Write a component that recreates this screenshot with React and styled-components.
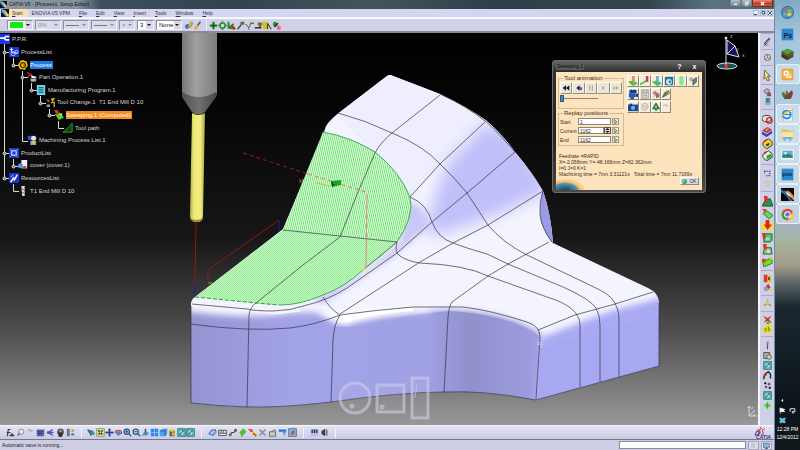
import React from "react";
import styled, { createGlobalStyle } from "styled-components";

const GlobalStyle = createGlobalStyle`
    html, body, #root {
        height: 100%;
        margin: 0;
    }
    body {
        overflow: hidden;
        background: #000;
        font-family: "Liberation Sans", Arial, sans-serif;
        font-size: 6px;
        color: #1c1c30;
    }
    * {
        box-sizing: border-box;
    }
    button, input, select {
        font: inherit;
        color: inherit;
        margin: 0;
        padding: 0;
        border: 0;
        background: none;
        border-radius: 0;
        outline: none;
    }
`;

const Desktop = styled.div`
    display: grid;
    grid-template-columns: minmax(0, 1fr) 26px;
    height: 100vh;
`;

const AppWindow = styled.div`
    display: flex;
    flex-direction: column;
    min-width: 0;
    background: #cfcfe6;
`;

const TitleBar = styled.header`
    display: flex;
    align-items: center;
    gap: 2px;
    height: 9px;
    font-size: 5px;
    line-height: 9px;
    color: #0c1218;
    background: linear-gradient(90deg, #8b98a4 0, #84919c 10%, #3d4f5d 13%, #33434f 30%, #43545f 48%, #2f3f4b 64%, #33454f 84%, #5a7482 92%, #4b616d 100%);
`;

const TitleText = styled.h1`
    flex: 1;
    margin: 0;
    font-size: 5px;
    font-weight: 400;
    white-space: nowrap;
`;

const CaptionButtons = styled.div`
    display: flex;
    align-self: flex-start;
    margin-right: 1px;
`;

const CaptionButton = styled.button`
    display: flex;
    justify-content: center;
    align-items: center;
    width: ${(props) => (props.$close ? "21px" : "11px")};
    height: 7px;
    border-radius: 0 0 2px 2px;
    border: 1px solid ${(props) => (props.$close ? "#7a2a1c" : "#6d7f8b")};
    border-top: 0;
    background: ${(props) => (props.$close ? "linear-gradient(#e08a78, #c23a22 60%, #d8573c)" : "linear-gradient(#b4c0c8, #6f808c)")};
`;

const MenuBar = styled.nav`
    display: flex;
    align-items: center;
    height: 9px;
    padding: 0 1px;
    font-size: 5px;
    background: #d5d5ee;
    border-bottom: 1px solid #f2f2fb;
`;

const MenuList = styled.div`
    display: flex;
    flex: 1;
    align-items: center;
    gap: 9px;
    margin-left: 3px;
`;

const MenuItem = styled.button`
    height: 8px;
    line-height: 8px;
    white-space: nowrap;
    color: #303048;
    background: ${(props) => (props.$active ? "#fbe0b4" : "none")};
    box-shadow: ${(props) => (props.$active ? "-3px 0 #fbe0b4, 5px 0 #fbe0b4" : "none")};
`;

const MdiButton = styled.button`
    display: flex;
    align-items: center;
    justify-content: center;
    width: 6px;
    height: 6px;
    margin-left: 1px;
    background: #e6f0f8;
    border: 1px solid #a7c2d6;
`;

const TopToolbar = styled.div`
    display: flex;
    align-items: center;
    gap: 2px;
    height: 15px;
    padding-left: 7px;
    background: #d0d0e8;
    border-top: 1px solid #fafaff;
    border-bottom: 2px solid #8a8a9c;
`;

const ComboBox = styled.div`
    position: relative;
    width: ${(props) => props.$width}px;
    height: 10px;
    background: ${(props) => (props.$off ? "#dcdce8" : "#ffffff")};
    border: 1px solid #8d8da4;
    border-right-color: #f2f2fa;
    border-bottom-color: #f2f2fa;
    &::before {
        content: "";
        position: absolute;
        left: 2px;
        right: 9px;
        top: ${(props) => (props.$fill ? "1px" : "4px")};
        height: ${(props) => (props.$fill ? "6px" : "1px")};
        background: ${(props) => props.$fill || props.$rule || "none"};
    }
    &::after {
        content: "";
        position: absolute;
        right: 2px;
        top: 3px;
        border: 2px solid transparent;
        border-top-color: ${(props) => (props.$off ? "#8a8a9c" : "#111")};
    }
`;

const ComboSelect = styled.select`
    appearance: none;
    display: block;
    width: 100%;
    height: 8px;
    padding-left: 2px;
    font-size: 6px;
    line-height: 8px;
    color: ${(props) => (props.$off ? "#8c8c9e" : "#141428")};
    background: linear-gradient(#d6d6e8, #d6d6e8) right / 7px 8px no-repeat;
`;

const ToolButton = styled.button`
    display: flex;
    align-items: center;
    justify-content: center;
    flex: none;
    width: ${(props) => props.$width || 9}px;
    height: ${(props) => props.$height || 10}px;
    svg {
        display: block;
        flex: none;
        width: ${(props) => props.$icon || 9}px;
        height: ${(props) => props.$icon || 9}px;
    }
`;

const TopTools = styled.div`
    display: flex;
    margin-left: ${(props) => (props.$divided ? "2px" : 0)};
    padding-left: ${(props) => (props.$divided ? "2px" : 0)};
    border-left: ${(props) => (props.$divided ? "1px solid #efeffa" : 0)};
`;

const Workspace = styled.div`
    display: flex;
    flex: 1;
    min-height: 0;
`;

const Viewport = styled.main`
    position: relative;
    flex: 1;
    min-width: 0;
    overflow: hidden;
    background: linear-gradient(#000 0, #060606 20%, #161616 52%, #4c4c4c 75%, #989898 100%);
`;

const Scene = styled.svg`
    display: block;
    width: 100%;
    height: 100%;
`;

const TreePanel = styled.section`
    position: absolute;
    left: 0;
    top: 0;
    height: 164px;
`;

const TreeLines = styled.svg`
    position: absolute;
    left: 0;
    top: 0;
`;

const TreeList = styled.ul`
    position: relative;
    display: grid;
    grid-template-rows: repeat(13, 1fr);
    height: 100%;
    margin: 0;
    padding: 0;
    list-style: none;
`;

const TreeRow = styled.li`
    display: flex;
    align-items: center;
    gap: 2px;
    padding-left: ${(props) => props.$depth * 9}px;
    color: #d4d4d4;
    white-space: pre;
    svg {
        width: 10px;
        height: 10px;
    }
`;

const TreeLabel = styled.span`
    line-height: 8px;
    padding: 0 1px 0 0;
    color: ${(props) => (props.$mark ? "#fff" : "inherit")};
    background: ${(props) => props.$mark || "none"};
`;

const SideDock = styled.aside`
    display: flex;
    flex-direction: column;
    align-items: center;
    width: 16px;
    background: #cfcfe8;
    border-left: 2px solid #f4f4fc;
`;

const SideGroup = styled.div`
    width: 12px;
    padding: 3px 0;
    border-top: 1px solid #a9a9c4;
`;

const BottomToolbar = styled.div`
    display: flex;
    align-items: center;
    height: 15px;
    padding-left: 5px;
    background: linear-gradient(#e4e4f4, #cbcbe4);
    border-top: 1px solid #f6f6fc;
    border-bottom: 1px solid #77778c;
`;

const BottomGroup = styled.div`
    display: flex;
    padding-right: 6px;
    margin-right: 5px;
    border-right: 1px solid #f2f2fb;
`;

const Brand = styled.div`
    margin-left: auto;
    width: 20px;
    height: 14px;
`;

const StatusBar = styled.footer`
    display: flex;
    align-items: center;
    gap: 2px;
    height: 10px;
    padding: 0 2px;
    font-size: 5px;
    background: #cdcde4;
`;

const StatusText = styled.span`
    flex: 1;
`;

const CommandInput = styled.input`
    width: 127px;
    height: 8px;
    background: #fff;
    border: 1px solid #8c8ca2;
`;

const StatusButton = styled.button`
    display: flex;
    justify-content: center;
    width: 11px;
    height: 9px;
    background: #dedeee;
    border: 1px solid #a4a4bc;
    svg {
        width: 7px;
        height: 7px;
    }
`;

const Dialog = styled.section`
    position: absolute;
    right: 52px;
    top: 27px;
    width: 154px;
    padding: 0 3px 2px;
    border: 1px solid #6c6c6c;
    border-radius: 3px;
    background: linear-gradient(#666 0, #2f2f2f 8%, #262626 60%, #4a4a4a 100%);
    font-size: 5px;
    color: #3a2c20;
`;

const DialogTitle = styled.div`
    display: flex;
    align-items: center;
    height: 11px;
    color: #0a0a0a;
    h2 {
        margin: 0 auto 0 0;
        padding: 0 1px;
        font-size: 5px;
        font-weight: 400;
        line-height: 7px;
        background: #5c5c5c;
        border-radius: 2px;
    }
`;

const DialogCaption = styled.button`
    width: 15px;
    height: 8px;
    font-size: 7px;
    font-weight: 700;
    line-height: 8px;
    color: #fff;
`;

const DialogBody = styled.div`
    height: 118px;
    padding: 3px 2px;
    background: radial-gradient(ellipse 20px 12px at 9px 119px, #1a3040 0, #4b94bf 62%, #f7c065 76%, #fbd99c 100%, transparent 101%), #fde4bd;
`;

const DialogTop = styled.div`
    display: flex;
    gap: 3px;
`;

const DialogLeft = styled.div`
    width: 66px;
`;

const Panel = styled.fieldset`
    min-width: 0;
    height: ${(props) => props.$height}px;
    margin: 0 0 1px;
    padding: 0 1px;
    border: 1px solid #cdbd9f;
    legend {
        margin-left: 3px;
        padding: 0 1px;
        font-size: 6px;
        line-height: 7px;
    }
`;

const PlayRow = styled.div`
    display: grid;
    grid-template-columns: repeat(5, 1fr);
    margin-bottom: 1px;
`;

const PlayButton = styled.button`
    display: flex;
    align-items: center;
    justify-content: center;
    height: 12px;
    background: #ece6d8;
    border: 1px solid #fff;
    border-right-color: #99917f;
    border-bottom-color: #99917f;
    svg {
        width: 8px;
        height: 8px;
    }
`;

const ProgressSlider = styled.input`
    appearance: none;
    display: block;
    width: 38px;
    height: 7px;
    background: linear-gradient(#8a8272, #8a8272) center / 100% 1px no-repeat;
    &::-webkit-slider-thumb {
        appearance: none;
        width: 4px;
        height: 7px;
        background: #3e8fc4;
        border: 1px solid #2a5d80;
    }
`;

const FieldRow = styled.div`
    display: flex;
    align-items: center;
    height: 9px;
    label {
        width: 18px;
    }
`;

const FieldInput = styled.input`
    width: ${(props) => (props.$spin ? "26px" : "33px")};
    height: 7px;
    padding-left: 1px;
    background: #fff;
    border: 1px solid #8c8474;
`;

const Spinner = styled.button`
    width: 7px;
    height: 7px;
    background: #ddd8cc;
    border: 1px solid #555;
    svg {
        display: block;
        width: 5px;
        height: 5px;
    }
`;

const PickButton = styled.button`
    width: 7px;
    height: 7px;
    margin-left: 1px;
    background: #efe8d8;
    border: 1px solid #a49c8a;
    svg {
        display: block;
        width: 5px;
        height: 5px;
    }
`;

const OptionRow = styled.div`
    display: flex;
    margin-bottom: 1px;
`;

const OptionButton = styled.button`
    display: flex;
    align-items: center;
    justify-content: center;
    width: ${(props) => (props.$small ? "10px" : "12px")};
    height: 12px;
    background: #f3ecdc;
    border: 1px solid #fff;
    border-right-color: #8f8776;
    border-bottom-color: #8f8776;
    svg {
        flex: none;
        width: ${(props) => (props.$small ? "8px" : "10px")};
        height: ${(props) => (props.$small ? "8px" : "10px")};
    }
`;

const Readout = styled.p`
    margin: 6px 0 0 1px;
    line-height: 6px;
    white-space: pre;
`;

const OkButton = styled.button`
    display: flex;
    align-items: center;
    justify-content: center;
    gap: 2px;
    width: 19px;
    height: 8px;
    margin: 0 1px 0 auto;
    background: #d9d9ea;
    border: 1px solid #fff;
    border-right-color: #88889a;
    border-bottom-color: #88889a;
    &::before {
        content: "";
        width: 5px;
        height: 5px;
        border-radius: 50%;
        background: radial-gradient(circle at 35% 35%, #7fe07f, #0c7a14);
    }
`;

const Taskbar = styled.aside`
    display: flex;
    flex-direction: column;
    align-items: center;
    background: linear-gradient(#7fa9c4 0, #a5c6de 8%, #b3cde2 30%, #a3b4c0 50%, #a6b39a 54%, #a39c8a 59%, #5b6468 63%, #1c2830 68%, #0c141b 90%, #11181d 100%);
    border-left: 1px solid #6b8ca2;
`;

const TaskButton = styled.button`
    display: flex;
    align-items: center;
    justify-content: center;
    width: 24px;
    height: ${(props) => props.$height || 20}px;
    border: 1px solid ${(props) => (props.$open ? "#e9f1f7" : "transparent")};
    border-radius: 2px;
    background: ${(props) => (props.$open ? "rgba(235, 243, 250, 0.45)" : "none")};
    svg {
        width: 13px;
        height: 13px;
    }
`;

const Tray = styled.div`
    display: grid;
    grid-template-columns: 10px 10px;
    grid-auto-rows: 10px;
    justify-items: center;
    align-items: center;
    margin-top: auto;
    svg {
        width: 7px;
        height: 7px;
    }
`;

const Clock = styled.time`
    margin-bottom: 9px;
    font-size: 5px;
    line-height: 8px;
    text-align: center;
    color: #fff;
`;

// every glyph is drawn on a 12 x 12 grid
const glyphs = {
    app: <><rect width="12" height="12" fill="#0b1020" /><path d="M0 0L7 2L12 10L8 12L1 5Z" fill="#3f8fd6" /><path d="M4 3L12 8V12L7 10Z" fill="#f0a030" /><path d="M1 1L8 5L10 11" stroke="#fff" fill="none" /></>,
    minimize: <path d="M2 8H10" stroke="#fff" strokeWidth="3" />,
    restore: <path d="M3 5H8V10H3ZM5 4V2H10V8" fill="none" stroke="#fff" strokeWidth="2" />,
    close: <path d="M2 2L10 10M10 2L2 10" stroke="#fff" strokeWidth="3" />,
    paint: <><path d="M1 7Q3 2 7 5L6 10Q2 12 1 7Z" fill="#3d78cc" /><path d="M5 7L10 1L12 3L8 9Z" fill="#efc020" stroke="#4a4a20" strokeWidth=".7" /></>,
    wand: <><path d="M1 10L4 5L8 8L4 12Z" fill="#f3b21c" /><path d="M6 6L10 1" stroke="#3855a6" strokeWidth="2" /></>,
    plus: <><path d="M6 1V11M1 6H11" stroke="#208828" strokeWidth="3" /><path d="M6 3V9M3 6H9" stroke="#103c16" /></>,
    ring: <><circle cx="6" cy="6" r="3.5" fill="none" stroke="#228c2a" strokeWidth="2" /><path d="M6 0V4M6 8V12M0 6H4M8 6H12" stroke="#35a03c" strokeWidth="2" /></>,
    branch: <><path d="M2 1V9L10 10M2 9L9 4" stroke="#27852c" strokeWidth="2.5" fill="none" /><path d="M6 6L11 11" stroke="#cc2622" strokeWidth="2.5" /></>,
    drill: <><path d="M2 11L7 5" stroke="#54543e" strokeWidth="2" /><rect x="6" y="1" width="5" height="4" fill="#5c6c38" /></>,
    probe: <><path d="M1 4L5 9L8 3" stroke="#333" fill="none" /><rect x="7" y="2" width="5" height="2" fill="#61762a" /><path d="M5 8V12" stroke="#555" /></>,
    step: <><rect x="5" y="2" width="6" height="4" fill="#65742e" /><path d="M1 9H10M8 6V9" stroke="#303030" strokeWidth="2" /></>,
    fold: <><path d="M0 1H6V11H0Z" fill="#d8c010" /><path d="M6 3L11 11M6 3V11" stroke="#454525" strokeWidth="1.5" /></>,
    stop: <><circle cx="4" cy="4" r="3" fill="#259a33" /><path d="M3 8L8 3" stroke="#222" strokeWidth="2" /><circle cx="9" cy="9" r="3" fill="#f06c78" /></>,
    ppr: <><rect width="12" height="12" fill="#1b38e0" /><path d="M0 5H5L7 3H11M5 5L7 7H11" stroke="#fff" strokeWidth="2" fill="none" /></>,
    process: <><rect width="12" height="12" fill="#1736cf" /><path d="M1 3H5M3 1V7H10" stroke="#fff" fill="none" /><circle cx="5" cy="8" r="2.5" fill="none" stroke="#c9d6ff" /><circle cx="9" cy="6" r="2" fill="none" stroke="#c9d6ff" /></>,
    gear: <><path d="M6 0L8 1L11 2L11 4L12 7L10 9L8 12L5 11L2 11L1 8L0 6L1 4L3 1Z" fill="#f2bd12" /><circle cx="6" cy="6" r="3" fill="none" stroke="#473400" strokeWidth="1.5" /><path d="M6 6H10" stroke="#473400" /></>,
    part: <><path d="M0 0L5 4M1 6L6 2" stroke="#d4252c" strokeWidth="1.5" /><path d="M5 4L12 6L9 8L5 7Z" fill="#e9e9ef" /><path d="M4 8L11 8V11L5 12Z" fill="#b6b6c6" stroke="#555" strokeWidth=".6" /></>,
    sheet: <><rect x="1" y="0" width="10" height="12" fill="#6fd5e4" /><path d="M3 3H9M3 5H9M3 7H9M3 9H9" stroke="#124e82" /></>,
    change: <><path d="M1 2L6 4L4 7Z" fill="#a3532c" /><path d="M7 2L12 1L9 6Z" fill="#f7c425" /><path d="M2 9H6V12H2Z" fill="#979797" /><path d="M7 7L11 6V12" stroke="#e1b13a" strokeWidth="1.5" fill="none" /></>,
    sweep: <><path d="M1 5L7 3L12 9L6 12Z" fill="#3ddc32" /><path d="M0 0L5 0L6 5L3 6Z" fill="#d93126" /><path d="M7 5L10 4L9 7Z" fill="#fff" /></>,
    tri: <><path d="M0 11L5 7L11 0V11Z" fill="#123f12" stroke="#21b429" /></>,
    list: <><path d="M1 1H6V6H1Z" fill="#3853c8" /><circle cx="8" cy="4" r="3" fill="#e2e2ec" /><path d="M4 7H11V12H4Z" fill="#98a3bc" /><circle cx="8" cy="9" r="1.5" fill="#f1df28" /></>,
    product: <><rect width="12" height="12" fill="#1b37c6" /><circle cx="6" cy="6" r="3" fill="none" stroke="#aab8f4" strokeWidth="2" /><path d="M1 1L4 4M11 1L8 4M1 11L4 8M11 11L8 8" stroke="#aab8f4" /></>,
    cover: <><rect x="4" y="0" width="7" height="10" fill="#f0f2fa" /><circle cx="3" cy="7" r="3" fill="#489be6" /><path d="M5 9Q9 4 11 11Z" fill="#df333c" /></>,
    resource: <><rect width="12" height="12" fill="#1934d2" /><path d="M2 11L6 5M6 9L10 2" stroke="#dfe6ff" strokeWidth="2" /><path d="M2 5L5 2" stroke="#dfe6ff" /></>,
    mill: <><path d="M4 0H8V12H5Z" fill="#ddd" /><path d="M4 3L8 5M4 7L8 9" stroke="#555" /></>,
    cube: <><path d="M1 4L4 1H11V8L8 11H1Z" fill="#4fa0f0" /><path d="M1 4H8L11 1M8 4V11" stroke="#174c91" fill="none" /></>,
    fly: <><path d="M1 2L6 10M4 3L9 9" stroke="#176f77" strokeWidth="2" /><path d="M7 2L11 8L7 8Z" fill="#4690ba" /></>,
    fit: <><rect x="1" y="1" width="10" height="10" fill="#e9e38a" stroke="#7c8b58" /><path d="M3 3L9 9M9 3L3 9" stroke="#264c2b" strokeWidth="2" strokeDasharray="3 2" /></>,
    pan: <path d="M6 0L8 3H7V5H9V4L12 6L9 8V7H7V9H8L6 12L4 9H5V7H3V8L0 6L3 4V5H5V3H4Z" fill="#20458d" />,
    rotate: <><path d="M2 7Q1 3 6 3Q11 3 10 8" fill="none" stroke="#c53d3a" strokeWidth="1.5" /><circle cx="6" cy="7" r="3" fill="#5b7ec4" /></>,
    zoomin: <><circle cx="5" cy="5" r="3.5" fill="#bfe4f2" stroke="#24507d" strokeWidth="1.5" /><path d="M8 8L11 11M3 5H7M5 3V7" stroke="#24507d" strokeWidth="1.5" /></>,
    zoomout: <><circle cx="5" cy="5" r="3.5" fill="#bfe4f2" stroke="#24507d" strokeWidth="1.5" /><path d="M8 8L11 11M3 5H7" stroke="#24507d" strokeWidth="1.5" /></>,
    normal: <><path d="M1 10L4 6H11L8 10Z" fill="#4897a0" /><path d="M6 1V7" stroke="#216070" strokeWidth="2" /></>,
    views: <><rect x="1" y="1" width="10" height="10" fill="#2e8af6" /><path d="M6 1V11M1 6H11" stroke="#9cc8fa" strokeWidth="1" /></>,
    barrel: <><path d="M2 3H9V11H2Z" fill="#6d5f35" /><ellipse cx="5.5" cy="3" rx="3.5" ry="2" fill="#e0d151" /><path d="M5 6H9V10H5Z" fill="#d8c33c" /></>,
    scene: <><rect x="1" y="1" width="10" height="10" fill="#55bfae" stroke="#205e75" /><circle cx="6" cy="6" r="2.5" fill="#d7f0ef" /><path d="M3 9L9 3" stroke="#3673a0" strokeWidth="1.5" /></>,
    formula: <><path d="M2 11L3 2L6 2M1 6H6" stroke="#34343c" strokeWidth="1.5" fill="none" /><path d="M5 10H11M8 7V10" stroke="#34343c" strokeWidth="2" /></>,
    clip: <><circle cx="7" cy="5" r="3.5" fill="#e4e4ea" stroke="#77777f" /><path d="M2 10L5 7" stroke="#666" strokeWidth="2" /></>,
    faint: <path d="M2 4Q5 1 7 4M6 5L9 3" stroke="#a8a8bb" strokeWidth="1.5" fill="none" />,
    grid: <><rect x="1" y="2" width="10" height="9" fill="#6b74c0" /><path d="M1 4H11M4 4V11M7 4V11M1 7H11" stroke="#2c3055" /></>,
    link: <><circle cx="3" cy="6" r="2" fill="#6b5fa8" /><path d="M3 6L9 2M3 6L10 6M3 6L9 10" stroke="#465ab2" strokeWidth="2" /></>,
    lock: <><circle cx="6" cy="5" r="4.5" fill="#5b5b5b" /><path d="M2 6H10L8 12H4Z" fill="#34343a" /><circle cx="6" cy="4" r="1.5" fill="#aaa" /></>,
    nodes: <><rect x="1" y="1" width="4" height="10" fill="#5a7e92" /><rect x="7" y="2" width="4" height="3" fill="#c9a13e" /><rect x="7" y="7" width="4" height="3" fill="#64864a" /></>,
    blob: <><path d="M1 8L4 3L10 2L11 6L7 10Z" fill="#84a6ea" stroke="#3a5dae" /><path d="M4 8L8 4" stroke="#f2f5ff" /></>,
    ruler: <><rect x="1" y="3" width="10" height="7" fill="#e5e5d8" stroke="#3b3b40" /><path d="M4 3V7M7 3V7M1 7H11" stroke="#3b3b40" /></>,
    chain: <><path d="M2 10L5 6L8 6L11 2" stroke="#3f3f44" strokeWidth="1.5" fill="none" /><circle cx="3" cy="9" r="2" fill="#69696d" /><circle cx="10" cy="3" r="2" fill="#59595d" /></>,
    greenleaf: <><path d="M2 6L7 1L11 5L6 10Z" fill="#49c62b" stroke="#69a25a" strokeWidth=".8" /><path d="M5 9V12" stroke="#555" /></>,
    bolt: <><path d="M0 1L6 2L7 6L3 5Z" fill="#e04e22" /><path d="M5 5L10 6L12 11L6 9Z" fill="#f0cd27" /><path d="M7 7L11 11" stroke="#c02b22" strokeWidth="1.5" /></>,
    cross: <><path d="M2 2L10 10M10 2L2 10" stroke="#8c8c96" strokeWidth="2" /></>,
    box: <><path d="M2 5H10V11H2Z" fill="#c9d7b6" stroke="#48583d" /><path d="M5 5L8 2L11 4" stroke="#48583d" fill="none" /></>,
    tee: <><rect x="1" y="2" width="10" height="3" fill="#286dd6" /><path d="M6 5L11 5L8 11Z" fill="#56a6ec" /></>,
    map: <><rect x="1" y="1" width="10" height="10" fill="#71c6d8" stroke="#40559c" /><path d="M3 10L5 4L9 3L9 8Z" fill="#d65140" /></>,
    bars: <><path d="M1 2H11V10H1Z" fill="#8f9fe0" /><path d="M3 2V7M6 2V7M9 2V7" stroke="#282d4d" strokeWidth="1.5" /><path d="M1 8H11" stroke="#fff" /></>,
    speaker: <><path d="M2 4L7 1V11L2 8Z" fill="#3b3b44" /><path d="M9 2V10" stroke="#77777e" strokeWidth="2" /></>,
    pencil: <><path d="M2 10L9 2" stroke="#39405d" strokeWidth="3" /><path d="M3 9L9 3" stroke="#dfe4ff" /><path d="M1 11L8 11" stroke="#777" /></>,
    wheel: <><circle cx="6" cy="6" r="4" fill="#e0dfca" stroke="#81818b" strokeWidth="1.5" /><path d="M6 2V6L10 8M6 6L3 9" stroke="#666" fill="none" /></>,
    cursor: <><path d="M3 0L9 7H6L8 11L6 12L4 8L2 10Z" fill="#efe26a" stroke="#60603e" /></>,
    rock: <><path d="M1 4L5 1L9 3L7 7L3 7Z" fill="#b9b9c2" stroke="#53535b" /><path d="M6 6L10 6L11 11H5Z" fill="#7d5350" /></>,
    teal: <><rect x="3" y="1" width="7" height="10" fill="#86b6b1" /><path d="M4 3H9M4 6H9" stroke="#237368" strokeWidth="2" /></>,
    forbid: <><ellipse cx="5" cy="5" rx="5" ry="3.5" fill="#d8ead2" stroke="#333" /><circle cx="8" cy="7" r="3" fill="none" stroke="#df2228" strokeWidth="1.5" /></>,
    stackRed: <><path d="M0 5L6 1L11 4L5 8Z" fill="#e12e2c" /><path d="M0 6L5 9L11 5V8L5 12L0 9Z" fill="#2848bc" /><path d="M4 5L7 3" stroke="#6fe0e4" strokeWidth="1.5" /></>,
    stackYellow: <><path d="M1 5L7 1L11 4V8L5 12L1 8Z" fill="#f2dc2a" stroke="#32321f" /><path d="M4 7L8 5L8 8L5 9Z" fill="#27338b" /><path d="M2 4L5 2" stroke="#df2e2e" strokeWidth="2" /></>,
    stackGreen: <><path d="M1 5L7 1L11 4V8L5 12L1 8Z" fill="#eee" stroke="#333" /><path d="M5 6L10 4V8L5 11Z" fill="#19b42b" /><path d="M2 4L5 2" stroke="#de2a2a" strokeWidth="2" /></>,
    frame: <path d="M2 3H9V9M2 2V6M4 9H9" stroke="#45456c" strokeWidth="1.5" fill="none" strokeDasharray="2 1" />,
    ghost: <><path d="M2 2H9V10H2Z" fill="#b9c7d9" /><path d="M3 8L9 4" stroke="#f1d47c" strokeWidth="2" /></>,
    mount: <><path d="M0 11L4 4L9 3L12 11Z" fill="#239746" stroke="#165123" /><path d="M2 0H6V7H3Z" fill="#dd2b2b" /></>,
    slab: <><path d="M1 6L5 3L12 8L8 12Z" fill="#5edb52" stroke="#2a762e" /><path d="M0 1L5 1L4 6Z" fill="#e43b2c" /></>,
    pocket: <><path d="M0 4L4 2L6 7L9 2L12 4V11H0Z" fill="#f1e124" /><path d="M4 0H8V5H11L6 11L2 5H4Z" fill="#dc2720" /></>,
    crate: <><path d="M2 4L4 2H11V9L9 11H2Z" fill="#58c46c" stroke="#1f632b" /><path d="M4 6H8V9H4Z" fill="#a6e3b0" /><path d="M0 1H4V7H1Z" fill="#dd342b" /></>,
    arch: <><path d="M1 11L3 4H10L11 11Z" fill="#7ec775" stroke="#355d33" /><circle cx="7" cy="8" r="2" fill="#d9dfda" /><path d="M1 0H5V6H2Z" fill="#df3027" /></>,
    flag: <><path d="M1 6L11 2L11 8L2 12Z" fill="#63e530" stroke="#49701c" /><path d="M0 3H4V7H0Z" fill="#e3411c" /><path d="M9 1H12V4H9Z" fill="#e9d82c" /></>,
    twoTone: <><rect x="1" y="1" width="5" height="10" fill="#df3b24" /><rect x="6" y="2" width="5" height="9" fill="#d7c329" /><path d="M8 4V8" stroke="#25401f" strokeWidth="2" /></>,
    knob: <><path d="M2 7L7 1L10 6L8 9Z" fill="#c43331" /><circle cx="4" cy="8" r="3" fill="#95a09a" /><path d="M8 7L11 10" stroke="#e2d12c" strokeWidth="2" /></>,
    tripod: <><path d="M6 1V6L1 9M6 6L11 9" stroke="#b9aa2b" strokeWidth="2" fill="none" /><circle cx="6" cy="5" r="2" fill="#cfd44a" /></>,
    redX: <><path d="M0 1L6 4L11 1L8 6L12 11L6 8L1 10L4 6Z" fill="#e13320" /><path d="M4 12L7 7L9 12Z" fill="#35b834" /></>,
    yellowMix: <><path d="M0 2L5 3L7 0L12 1L11 6L12 12H0Z" fill="#f1e024" /><path d="M3 5L4 11M7 3L8 10" stroke="#4c9c36" strokeWidth="1.5" /><path d="M1 7H11" stroke="#d0772c" /></>,
    needle: <><path d="M6 1V11" stroke="#4c4c54" strokeWidth="1.5" /><path d="M6 1V5" stroke="#8e8e96" strokeWidth="3" /></>,
    machine: <><path d="M1 2H9V10H1Z" fill="#a9b0b0" stroke="#35393a" /><circle cx="8" cy="8" r="3" fill="#ded58d" stroke="#444" /></>,
    robot: <><path d="M1 11L2 5L7 1L10 4V10" stroke="#29292e" strokeWidth="2" fill="none" /><circle cx="3" cy="5" r="2" fill="#d03229" /></>,
    dots: <><circle cx="3" cy="3" r="1.5" /><circle cx="8" cy="4" r="2" fill="#666" /><circle cx="4" cy="8" r="1.7" fill="#8b3a5b" /><circle cx="9" cy="9" r="1.5" /></>,
    arrowGreen: <><path d="M1 6L7 1V4H10V8H7V11Z" fill="#57d534" /><path d="M6 2V10" stroke="#2b9a54" /></>,
    rew: <path d="M1 6L6 2V10ZM6 6L11 2V10Z" fill="#171740" />,
    back: <path d="M2 6L7 2V10ZM8 5H10V9H8Z" fill="#171740" />,
    pause: <path d="M4 2V10M8 2V10" stroke="#a6a092" strokeWidth="1.5" />,
    play: <path d="M5 3L8 6L5 9Z" fill="#9d9788" />,
    ffwd: <path d="M2 3L6 6L2 9ZM6 3L10 6L6 9Z" fill="#b0a99a" />,
    updown: <path d="M6 0L11 5H1ZM6 12L1 7H11Z" fill="#111" />,
    pick: <path d="M3 1L10 8H6V11L3 10Z" fill="#e8f5d2" stroke="#36543a" strokeWidth="1.5" />,
    toolA: <><path d="M0 7L6 5L12 9L6 12Z" fill="#39cc3c" /><path d="M5 0L8 0V8H5Z" fill="#ee8261" /></>,
    toolB: <><path d="M0 10L9 5" stroke="#3abf45" strokeWidth="2" /><path d="M7 0H10V7H7Z" fill="#db3b31" /></>,
    toolC: <><path d="M0 7L6 5L12 9L6 12Z" fill="#41c847" /><path d="M5 0H8V8H5Z" fill="#5ca8d8" /></>,
    camBlue: <><rect x="1" y="1" width="10" height="10" rx="1" fill="#2476a1" /><circle cx="6" cy="7" r="3.5" fill="#c9e8f1" /><circle cx="7" cy="7" r="1.5" fill="#3874ac" /></>,
    greenBar: <rect x="4" y="0" width="5" height="11" rx="2" fill="#8be485" />,
    tools: <><circle cx="4" cy="4" r="2.5" fill="#9cb79a" /><path d="M6 5L10 2V7L6 11Z" fill="#6f857b" stroke="#3d4f46" /></>,
    movie: <><circle cx="4" cy="3" r="2.5" fill="#193f87" /><circle cx="8" cy="3" r="2.5" fill="#193f87" /><rect x="1" y="5" width="8" height="5" fill="#245db0" /><path d="M9 6L12 5V10L9 9ZM3 10H7V12H3Z" fill="#193f87" /></>,
    save: <><path d="M2 1H10V11H2Z" fill="#d7d2c6" stroke="#a19b90" /><path d="M4 2V5H8V2M4 8H8" stroke="#9b958a" fill="none" /></>,
    sketch: <path d="M2 4Q5 0 8 2L10 6L7 10L3 9ZM4 5L8 6" fill="#e5dfd0" stroke="#b5ae9e" />,
    photo: <><rect x="0" y="3" width="12" height="8" fill="#1f4894" /><circle cx="6" cy="7" r="2.5" fill="#63b8e9" /><rect x="2" y="2" width="3" height="2" fill="#193872" /></>,
    redPart: <><path d="M1 3L6 1L8 6L3 8Z" fill="#d67472" /><path d="M6 6L11 5V11L6 12Z" fill="#a0655c" /><path d="M3 10L10 3" stroke="#777" /></>,
    olive: <><path d="M1 11L4 4L10 1L11 5L6 8Z" fill="#77815b" stroke="#363b29" /><path d="M8 2L11 4L9 7Z" fill="#c9b936" /></>,
    recycle: <><path d="M2 8L6 1L10 8Z" fill="none" stroke="#237d3b" strokeWidth="2.5" /><circle cx="6" cy="10" r="2" fill="#3ca452" /></>,
    screen: <><rect x="1" y="2" width="10" height="7" fill="#8fb8db" stroke="#355c80" /><path d="M4 11H8" stroke="#355c80" strokeWidth="2" /></>,
    tray: <path d="M7 3L4 6L7 9Z" fill="#fff" />,
    trayFlag: <path d="M2 1V12M2 2L10 4L8 6L10 8H2Z" fill="#fff" stroke="#fff" />,
    trayNet: <path d="M2 3H10V8H5M5 10H9M2 3V8" stroke="#fff" strokeWidth="1.5" fill="none" />,
    dropbox: <path d="M3 1L6 3L9 1L12 3L9 6L12 8L9 11L6 9L3 11L0 8L3 6L0 3Z" fill="#5fc5ec" />,
};

const launchers = {
    orb: <><circle cx="10" cy="10" r="10" fill="#2d6089" /><circle cx="10" cy="10" r="9" fill="#4b91bb" /><path d="M4 6Q7 4 9 6V10Q7 8 4 10Z" fill="#ee5a35" /><path d="M10 6Q13 7 16 5V9Q13 11 10 10Z" fill="#86c741" /><path d="M4 11Q7 9 9 11V15Q7 13 4 15Z" fill="#58b6ee" /><path d="M10 11Q13 12 16 10V14Q13 16 10 15Z" fill="#fbd244" /></>,
    ps: <><rect x="1" y="1" width="18" height="18" fill="#2e86cd" /><text x="4" y="15" fontSize="11" fontWeight="700" fill="#08233f">Ps</text></>,
    block: <><path d="M10 1L19 5V14L10 19L1 14V5Z" fill="#69462d" /><path d="M10 1L19 5L10 10L1 5Z" fill="#5a9b3a" /><path d="M10 10L19 5V8L10 13L1 8V5Z" fill="#3d6f29" /><path d="M10 13V19L1 14V9Z" fill="#4d321f" /></>,
    outlook: <><rect x="1" y="1" width="18" height="18" rx="2" fill="#eda032" /><rect x="3" y="3" width="14" height="14" fill="#f6b34a" /><circle cx="8" cy="8" r="3" fill="none" stroke="#fff" strokeWidth="2" /><path d="M10 10H16V15H8Z" fill="#fff" /><path d="M9 11L12 13L16 10" stroke="#c67d1c" fill="none" /></>,
    tank: <><path d="M2 5L6 9L9 3L11 9L17 3L18 9L15 17H5Z" fill="#654838" /><path d="M1 7L8 10L7 15L3 14Z" fill="#377d35" /><path d="M10 9L18 6L17 14L12 15Z" fill="#923936" /><path d="M6 5L8 10" stroke="#d7ae52" strokeWidth="2" /></>,
    ie: <><rect x="4" y="0" width="14" height="20" fill="#f5f9fd" stroke="#9cb7ca" /><circle cx="9" cy="10" r="6" fill="none" stroke="#278cd2" strokeWidth="3" /><path d="M4 10H14" stroke="#278cd2" strokeWidth="2" /><path d="M1 16Q2 8 17 3" fill="none" stroke="#eabb38" strokeWidth="2" /></>,
    folder: <><path d="M1 2H8L10 4H19V17H1Z" fill="#e7bd5d" /><path d="M1 6H19V14H1Z" fill="#f8e5a3" /><path d="M4 14H16V20H13V17H7V20H4Z" fill="#6db4de" /></>,
    picture: <><rect x="0" y="2" width="20" height="16" fill="#eff6fa" /><rect x="2" y="4" width="16" height="11" fill="#61add4" /><path d="M2 11Q9 6 18 12V15H2Z" fill="#2e8272" /><circle cx="7" cy="8" r="2" fill="#e5f4f8" /></>,
    pse: <><rect x="1" y="1" width="18" height="18" fill="#2889cf" /><text x="2" y="13" fontSize="9" fontWeight="700" fill="#082941">pse</text></>,
    nova: <><rect x="0" y="0" width="20" height="20" fill="#05070c" /><path d="M0 2Q5 4 9 9L18 20H13Q7 9 0 7Z" fill="#2b6fa8" /><path d="M8 3Q16 5 20 14V19Q13 14 8 3Z" fill="#f1913c" /><path d="M5 4Q12 7 16 15Q10 12 5 4Z" fill="#fff" /></>,
    chrome: <><circle cx="10" cy="10" r="9" fill="#e44335" /><path d="M2 6L10 19A9 9 0 0 1 2 6Z" fill="#32a650" /><path d="M10 19L18 6A9 9 0 0 1 10 19Z" fill="#fbd130" /><circle cx="10" cy="10" r="5" fill="#fff" /><circle cx="10" cy="10" r="3.5" fill="#3e7fe0" /></>,
};

const Glyph = ({ name, size = 12 }) => (
    <svg viewBox="0 0 12 12" width={size} height={size} aria-hidden="true">{glyphs[name]}</svg>
);

const treeItems = [
    { depth: 0, icon: "ppr", label: "P.P.R." },
    { depth: 1, icon: "process", label: "ProcessList" },
    { depth: 2, icon: "gear", label: "Process", mark: "#1d7be8" },
    { depth: 3, icon: "part", label: "Part Operation.1" },
    { depth: 4, icon: "sheet", label: "Manufacturing Program.1" },
    { depth: 5, icon: "change", label: "Tool Change.1  T1 End Mill D 10" },
    { depth: 6, icon: "sweep", label: "Sweeping.1 (Computed)", mark: "#f58a1f" },
    { depth: 7, icon: "tri", label: "Tool path" },
    { depth: 3, icon: "list", label: "Machining Process List.1" },
    { depth: 1, icon: "product", label: "ProductList" },
    { depth: 2, icon: "cover", label: "cover (cover.1)" },
    { depth: 1, icon: "resource", label: "ResourcesList" },
    { depth: 2, icon: "mill", label: "T1 End Mill D 10" },
];

const menus = ["ENOVIA V5 VPM", "File", "Edit", "View", "Insert", "Tools", "Window", "Help"];

const sideGroups = [
    { pitch: 9, icons: ["pencil"] },
    { pitch: 9, icons: ["wheel"] },
    { pitch: 12, icons: ["cursor"] },
    { pitch: 9, icons: ["rock", "teal"] },
    { pitch: 12, icons: ["forbid", "stackRed", "stackYellow", "stackGreen"] },
    { pitch: 10, icons: ["frame", "ghost"] },
    { pitch: 12, icons: ["mount", "slab", "pocket", "crate", "arch", "flag"] },
    { pitch: 9, icons: ["twoTone", "knob"] },
    { pitch: 9, icons: ["tripod"] },
    { pitch: 9, icons: ["redX", "yellowMix"] },
    { pitch: 10, icons: ["needle", "machine", "scene", "robot", "dots", "scene", "arrowGreen"] },
];

const bottomGroups = [
    { pitch: 10, icons: ["formula", "clip", "faint", "grid", "link", "lock", "nodes"] },
    { pitch: 9, icons: ["fly", "fit", "pan", "rotate", "zoomin", "zoomout", "normal", "views", "cube", "barrel", "scene", "scene"] },
    { pitch: 10, icons: ["blob", "ruler", "chain", "greenleaf", "bolt", "cross", "box", "tee", "map"] },
    { pitch: 10, icons: ["bars", "speaker"] },
];

const tasks = [
    { icon: "orb", height: 24 },
    { icon: "ps" },
    { icon: "block" },
    { icon: "outlook", open: true },
    { icon: "tank" },
    { icon: "ie", open: true },
    { icon: "folder", open: true },
    { icon: "picture", open: true },
    { icon: "pse", open: true },
    { icon: "nova", open: true },
    { icon: "chrome", open: true },
];

const Combo = ({ label, value, width, off, fill, rule }) => (
    <ComboBox $width={width} $off={off} $fill={fill} $rule={rule}>
        <ComboSelect aria-label={label} $off={off} defaultValue={value}>
            <option value={value}>{value}</option>
        </ComboSelect>
    </ComboBox>
);

const PART = "M387 76Q390 74 393 76L440 94Q468 107 487 121Q502 134 515 152Q532 172 543 191Q551 214 553 243L648 288Q659 293 659 303V366L536 400Q482 390 444 392Q400 392 331 402Q280 408 247 407Q216 406 191 403V306Q191 299 195 297L283 229L324 132Q325 123 340 112Z";
const UPPER_PATH = "M323 132Q351 137 375 152Q400 172 410 197Q415 216 397 242L283 230Z";
const LOWER_PATH = "M283 230L397 242Q384 256 363 270Q343 288 323 295Q300 305 280 305Q263 305 256 303L195 297Z";

const PartScene = () => (
    <Scene viewBox="0 33 758 392" preserveAspectRatio="xMidYMid slice" role="img" aria-label="Part and tool">
        <defs>
            <clipPath id="part"><path d={PART} /></clipPath>
            <filter id="soft" x="-30%" y="-30%" width="160%" height="160%"><feGaussianBlur stdDeviation="8" /></filter>
            <filter id="edge" x="-10%" y="-10%" width="120%" height="120%"><feGaussianBlur stdDeviation="3" /></filter>
            <linearGradient id="shank"><stop offset="0" stopColor="#777" /><stop offset=".4" stopColor="#a0a0a0" /><stop offset="1" stopColor="#7c7c7c" /></linearGradient>
            <linearGradient id="cone"><stop offset="0" stopColor="#505050" /><stop offset=".5" stopColor="#717171" /><stop offset="1" stopColor="#474747" /></linearGradient>
            <linearGradient id="cutter"><stop offset="0" stopColor="#b0aa3c" /><stop offset=".25" stopColor="#eeea78" /><stop offset=".7" stopColor="#f0ec80" /><stop offset="1" stopColor="#a8a23c" /></linearGradient>
            <linearGradient id="front" x1="191" x2="540" y1="0" y2="0" gradientUnits="userSpaceOnUse">
                <stop offset="0" stopColor="#9494d2" />
                <stop offset=".3" stopColor="#a3a3e8" />
                <stop offset=".68" stopColor="#a0a0e4" />
                <stop offset=".8" stopColor="#9090cc" />
                <stop offset="1" stopColor="#9f9fe0" />
            </linearGradient>
            <pattern id="hatch" width="2" height="3" patternUnits="userSpaceOnUse" patternTransform="rotate(-12)">
                <rect width="2" height="3" fill="#f0fdf0" />
                <path d="M.5 0V3" stroke="#6be56b" />
            </pattern>
            <pattern id="mesh" width="2" height="2" patternUnits="userSpaceOnUse">
                <rect width="2" height="2" fill="#c8f7c8" />
                <path d="M0 0H1V1H0ZM1 1H2V2H1Z" fill="#93ec93" />
            </pattern>
        </defs>

        <g fill="none" stroke="#8c1a1c">
            <path d="M196 222L195 284M279 220L208 270V283" />
            <path d="M195 284L194 298M279 220V231" stroke="#20209c" />
            <path d="M208 283H212" stroke="#a89a20" />
        </g>

        <g clipPath="url(#part)">
            <rect x="180" y="60" width="490" height="360" fill="#f4f4ff" />
            <path d="M387 70L440 94L487 121L440 164L410 197L370 150L330 110Z" fill="#eeeeff" />
            <path d="M487 122L520 140L552 190L488 218L435 236L425 232L434 200L446 165Z" fill="#bfbffa" filter="url(#soft)" />
            <path d="M410 200L424 210L430 226L392 258L345 290L322 304L312 300L365 272L400 242Z" fill="#c8c8f6" filter="url(#edge)" />
            <path d="M544 185Q538 205 541 222Q545 234 553 244L570 243L558 190Z" fill="#9a9ae8" />
            <path d="M185 311Q240 319 275 315Q300 311 322 313L343 322Q390 313 450 310Q510 313 541 334L536 410L180 420Z" fill="url(#front)" filter="url(#edge)" />
            <path d="M185 325L320 328L345 330Q390 316 450 311Q510 315 539 336L536 410H180Z" fill="url(#front)" />
            <path d="M185 302Q240 308 275 312L300 309" fill="none" stroke="#f4f4ff" strokeWidth="5" />
            <path d="M318 310Q330 310 340 315Q370 309 430 308L432 311Q370 314 347 325Q338 326 318 312Z" fill="#fff" filter="url(#edge)" />
            <path d="M341 315Q375 310 413 308L413 311Q370 314 345 322Z" fill="#fff" />
            <path d="M540 338Q590 318 615 310L664 297V410H534Z" fill="#aaaaf4" filter="url(#edge)" />
            <path d="M540 348L665 314V410H536Z" fill="#a8a8f2" />
        </g>

        <path d={UPPER_PATH} fill="url(#hatch)" />
        <path d={LOWER_PATH} fill="url(#mesh)" />
        <path d="M323 132Q351 137 375 152Q400 172 410 197Q415 216 397 242M363 270Q343 288 323 295Q300 305 280 305" fill="none" stroke="#4aa85a" />
        <path d="M195 297L256 303L280 305" fill="none" stroke="#2c9a3c" strokeDasharray="4 2" />

        <g fill="none" stroke="#33333f" strokeWidth=".7">
            <path d="M338 113Q365 120 392 133Q424 146 440 164Q455 178 467 193L488 225Q503 243 527 255L573 277L600 290Q614 297 617 308Q619 312 619 320V377" />
            <path d="M440 95L392 133Q380 143 375 153L358 192L340 237L303 265L256 303Q250 307 249 315L247 407" />
            <path d="M485 122L440 164L410 197M440 94Q468 107 485 121Q490 124 515 152" />
            <path d="M515 152L467 193L432 222L397 253Q370 272 347 288Q328 300 307 305Q290 311 273 311Q255 311 247 309L192 304" />
            <path d="M543 191L488 225L453 243L420 262L340 314" />
            <path d="M543 191Q539 202 540 215Q542 229 552 242" />
            <path d="M410 197Q427 204 432 222Q438 238 453 243Q466 248 487 254L508 264L563 287Q590 299 596 308Q600 315 600 325V382" />
            <path d="M397 242Q394 252 400 256Q407 261 420 263Q466 265 488 276L547 297Q580 307 580 325V387" />
            <path d="M549 242L508 264L488 276L452 302Q449 306 448 317L444 392" />
            <path d="M653 292L615 304L575 315L538 330" />
            <path d="M340 315Q375 310 413 307L463 307Q490 310 527 322Q540 326 540 337L536 399" />
            <path d="M191 324Q248 332 290 328Q315 325 340 315" />
            <path d="M323 297Q330 309 340 315Q334 324 333 340L331 402" />
            <path d="M283 230L397 242L363 270" />
            <path d="M191 306V403Q216 406 247 407Q280 408 331 402Q400 392 444 392Q482 390 536 400L659 366V303" />
        </g>

        <path d="M243 153L308 174" stroke="#9c1c22" strokeDasharray="4 3" />
        <path d="M308 174L366 192" stroke="#d87870" strokeDasharray="4 3" />
        <path d="M367 194L366 267" stroke="#dc8a80" />
        <path d="M316 183L330 186" stroke="#b4c930" />
        <path d="M331 181L341 180V185L332 187Z" fill="#17a51f" />
        <path d="M331 181L335 185L332 187Z" fill="#0d5b14" />
        <text x="299" y="183" fontSize="5" fill="#c17c17">M</text>
        <path d="M365 268L362 271" stroke="#d8da46" strokeWidth="2" />
        <path d="M537 342L540 345M540 342L537 345" stroke="#dcdcff" strokeWidth=".7" />

        <path d="M182 33H217V92L216 97H182Z" fill="url(#shank)" />
        <path d="M182 92Q199 102 216 92L216 97L205 112Q198 117 192 112L182 97Z" fill="url(#cone)" />
        <path d="M192 113Q198 117 205 113L203 216Q203 222 197 222Q190 222 190 216Z" fill="url(#cutter)" />
        <path d="M190 218Q196 222 203 218Q201 222 197 222Q192 222 190 218Z" fill="#918b34" />

        <g fill="rgba(215, 215, 240, 0.1)" stroke="rgba(205, 205, 232, 0.6)" strokeWidth="3">
            <circle cx="355" cy="398" r="15" />
            <rect x="377" y="385" width="27" height="27" />
            <rect x="412" y="378" width="16" height="40" />
            <path d="M417 383L415 398" strokeWidth="1" />
            <circle cx="352" cy="406" r="1" />
            <circle cx="382" cy="407" r="1" />
        </g>

        <g fill="none" stroke="#dcdce8">
            <path d="M727 40L735 46L739 57L727 54Z" fill="#161660" />
            <path d="M727 54L735 46" />
            <ellipse cx="727" cy="66" rx="10" ry="3" fill="#175055" />
            <path d="M726 38V65" />
            <circle cx="726" cy="38" r="1" fill="#fff" />
            <rect x="724" y="65" width="4" height="3" fill="#e02b20" stroke="none" />
        </g>
        <g fontSize="5" fill="#c9c93a">
            <text x="730" y="38">z</text>
            <text x="736" y="51">y</text>
            <text x="742" y="57">x</text>
        </g>
        <g stroke="#e8e8e8" fill="none" strokeWidth=".8">
            <path d="M749 407V416H757M749 416L755 410M748 408L749 406L750 408" />
        </g>
        <g fontSize="4" fill="#eee">
            <text x="751" y="409">z</text>
            <text x="753" y="416">x</text>
        </g>
    </Scene>
);

const SpecTree = () => (
    <TreePanel>
        <TreeLines width="80" height="164" viewBox="0 0 80 164" aria-hidden="true">
            <g stroke="#d8d8d8" fill="none">
                <path d="M4.5 8V145.5M4 19.5H10M13.5 25V32.5H19M22.5 38V108.5H28M22 44.5H28M31.5 50V57.5H37M40.5 63V70.5H46M49.5 76V82.5H55M58.5 88V95.5H64M4 120.5H10M13.5 126V133.5H19M4 145.5H10M13.5 151V158.5H19" />
            </g>
            <g fill="#777" stroke="#d8d8d8">
                {[[4, 19], [13, 32], [22, 44], [31, 57], [40, 70], [49, 82], [4, 120], [13, 133], [4, 145]].map(([x, y]) => (
                    <circle key={`${x}-${y}`} cx={x + 0.5} cy={y + 0.5} r="1.5" />
                ))}
            </g>
        </TreeLines>
        <TreeList>
            {treeItems.map((item) => (
                <TreeRow key={item.label} $depth={item.depth}>
                    <Glyph name={item.icon} />
                    <TreeLabel $mark={item.mark}>{item.label}</TreeLabel>
                </TreeRow>
            ))}
        </TreeList>
    </TreePanel>
);

const SweepingDialog = () => (
    <Dialog aria-label="Sweeping.1">
        <DialogTitle>
            <h2>Sweeping.1</h2>
            <DialogCaption aria-label="Help">?</DialogCaption>
            <DialogCaption aria-label="Close">x</DialogCaption>
        </DialogTitle>
        <DialogBody>
            <DialogTop>
                <DialogLeft>
                    <Panel $height={34}>
                        <legend>Tool animation</legend>
                        <PlayRow>
                            {["rew", "back", "pause", "play", "ffwd"].map((name) => (
                                <PlayButton key={name} aria-label={name}><Glyph name={name} /></PlayButton>
                            ))}
                        </PlayRow>
                        <ProgressSlider type="range" aria-label="Progress" defaultValue="0" />
                    </Panel>
                    <Panel $height={36}>
                        <legend>Replay positions</legend>
                        {[["Start", "1"], ["Current", "1162"], ["End", "1162"]].map(([name, value]) => (
                            <FieldRow key={name}>
                                <label htmlFor={name}>{name}</label>
                                <FieldInput id={name} defaultValue={value} $spin={name === "Current"} />
                                {name === "Current" ? <Spinner aria-label="Step"><Glyph name="updown" /></Spinner> : null}
                                <PickButton aria-label={`Pick ${name}`}><Glyph name="pick" /></PickButton>
                            </FieldRow>
                        ))}
                    </Panel>
                </DialogLeft>
                <div>
                    <OptionRow>
                        {["toolA", "toolB", "toolC", "camBlue", "greenBar", "tools"].map((name) => (
                            <OptionButton key={name} aria-label={name}><Glyph name={name} /></OptionButton>
                        ))}
                    </OptionRow>
                    <OptionRow>
                        <OptionButton aria-label="Video"><Glyph name="movie" /></OptionButton>
                        <OptionButton aria-label="Save"><Glyph name="save" /></OptionButton>
                        <OptionButton aria-label="Compare" $small><Glyph name="redPart" /></OptionButton>
                        <OptionButton aria-label="Analyze" $small><Glyph name="olive" /></OptionButton>
                    </OptionRow>
                    <OptionRow>
                        <OptionButton aria-label="Photo"><Glyph name="photo" /></OptionButton>
                        <OptionButton aria-label="Settings"><Glyph name="sketch" /></OptionButton>
                        <OptionButton aria-label="Reset" $small><Glyph name="recycle" /></OptionButton>
                        <OptionButton aria-label="Previous" $small><Glyph name="faint" /></OptionButton>
                    </OptionRow>
                </div>
            </DialogTop>
            <Readout>
                {"Feedrate =RAPID\nX=-2.058mm Y=-48.166mm Z=82.362mm\nI=0 J=0 K=1\nMachining time = 7mn 3.31121s   Total time = 7mn 11.7169s"}
            </Readout>
            <OkButton>OK</OkButton>
        </DialogBody>
    </Dialog>
);

const App = () => {
    return (
        <>
            <GlobalStyle />
            <Desktop>
                <AppWindow>
                    <TitleBar>
                        <Glyph name="app" size={7} />
                        <TitleText>CATIA V5 - [Process1: Setup Editor]</TitleText>
                        <CaptionButtons>
                            <CaptionButton aria-label="Minimize"><Glyph name="minimize" size={5} /></CaptionButton>
                            <CaptionButton aria-label="Restore"><Glyph name="restore" size={5} /></CaptionButton>
                            <CaptionButton aria-label="Close" $close><Glyph name="close" size={5} /></CaptionButton>
                        </CaptionButtons>
                    </TitleBar>
                    <MenuBar>
                        <Glyph name="app" size={8} />
                        <MenuList>
                            <MenuItem $active><u>S</u>tart</MenuItem>
                            {menus.map((name) => (
                                <MenuItem key={name}>{name === "ENOVIA V5 VPM" ? name : <><u>{name[0]}</u>{name.slice(1)}</>}</MenuItem>
                            ))}
                        </MenuList>
                        <MdiButton aria-label="Minimize document"><svg viewBox="0 0 4 4" width="4" height="4"><path d="M0 3.5H3" stroke="#456" /></svg></MdiButton>
                        <MdiButton aria-label="Restore document"><svg viewBox="0 0 4 4" width="4" height="4"><path d="M1 .5H3.5V3H1Z" fill="none" stroke="#456" /></svg></MdiButton>
                        <MdiButton aria-label="Close document"><svg viewBox="0 0 4 4" width="4" height="4"><path d="M0 0L4 4M4 0L0 4" stroke="#456" /></svg></MdiButton>
                    </MenuBar>
                    <TopToolbar>
                        <Combo label="Color" value="" width={26} fill="#0bf00b" />
                        <Combo label="Transparency" value="0%" width={26} off />
                        <Combo label="Line weight" value="" width={26} off rule="#77778a" />
                        <Combo label="Line type" value="" width={26} off rule="#77778a" />
                        <Combo label="Point symbol" value="×" width={16} off />
                        <Combo label="Render style" value="3" width={17} />
                        <Combo label="Layer" value="None" width={26} />
                        <TopTools>
                            <ToolButton aria-label="Painter"><Glyph name="paint" /></ToolButton>
                            <ToolButton aria-label="Wizard"><Glyph name="wand" /></ToolButton>
                        </TopTools>
                        <TopTools $divided>
                            {["plus", "ring", "branch", "drill", "probe", "step", "fold", "stop"].map((name) => (
                                <ToolButton key={name} aria-label={name}><Glyph name={name} /></ToolButton>
                            ))}
                        </TopTools>
                    </TopToolbar>
                    <Workspace>
                        <Viewport>
                            <PartScene />
                            <SpecTree />
                            <SweepingDialog />
                        </Viewport>
                        <SideDock>
                            {sideGroups.map((group, g) => (
                                <SideGroup key={g}>
                                    {group.icons.map((name, i) => (
                                        <ToolButton key={i} aria-label={name} $width={12} $height={group.pitch} $icon={group.pitch > 10 ? 11 : 9}><Glyph name={name} /></ToolButton>
                                    ))}
                                </SideGroup>
                            ))}
                        </SideDock>
                    </Workspace>
                    <BottomToolbar>
                        {bottomGroups.map((group, g) => (
                            <BottomGroup key={g}>
                                {group.icons.map((name, i) => (
                                    <ToolButton key={i} aria-label={name} $width={group.pitch}><Glyph name={name} /></ToolButton>
                                ))}
                            </BottomGroup>
                        ))}
                        <Brand>
                            <svg viewBox="0 0 20 14" width="20" height="14">
                                <path d="M6 1Q9 2 6 4M3 4H5Q8 7 4 9L6 3M11 3Q7 3 9 6Q11 8 7 9" fill="none" stroke="#d52f2f" />
                                <path d="M3 5L1 9H4Q7 6 3 5" fill="none" stroke="#35359c" />
                                <text x="2" y="13" fontSize="5" fontStyle="italic" fontWeight="700" fill="#35358c">CATIA</text>
                            </svg>
                        </Brand>
                    </BottomToolbar>
                    <StatusBar>
                        <StatusText>Automatic save is running...</StatusText>
                        <CommandInput aria-label="Command" />
                        <StatusButton aria-label="History"><Glyph name="ghost" /></StatusButton>
                        <StatusButton aria-label="Display"><Glyph name="screen" /></StatusButton>
                    </StatusBar>
                </AppWindow>
                <Taskbar>
                    {tasks.map((task) => (
                        <TaskButton key={task.icon} aria-label={task.icon} $open={task.open} $height={task.height}>
                            <svg viewBox="0 0 20 20" aria-hidden="true">{launchers[task.icon]}</svg>
                        </TaskButton>
                    ))}
                    <Tray>
                        <Glyph name="tray" />
                        <span />
                        <Glyph name="trayFlag" />
                        <Glyph name="trayNet" />
                        <Glyph name="dropbox" />
                    </Tray>
                    <Clock>12:28 PM<br />12/4/2012</Clock>
                </Taskbar>
            </Desktop>
        </>
    );
};

export default App;
